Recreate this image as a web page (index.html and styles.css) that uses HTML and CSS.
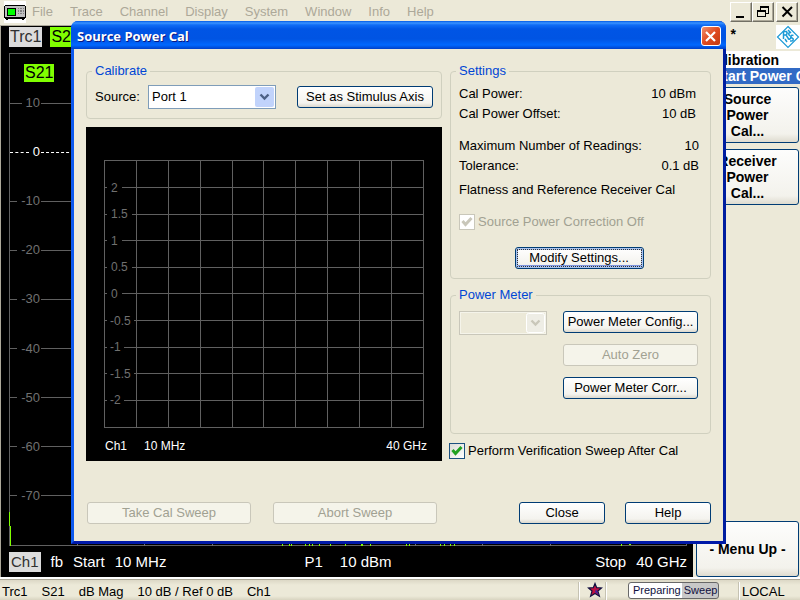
FILE: index.html
```html
<!DOCTYPE html>
<html lang="en">
<head>
<meta charset="utf-8">
<title>Source Power Cal</title>
<link rel="stylesheet" href="styles.css">
</head>
<body>
<header class="menubar">
  <svg class="app-icon" width="22" height="22" viewBox="0 0 22 22" shape-rendering="crispEdges" aria-hidden="true">
    <path fill="#fff" d="M0 0h22v22H0z"/>
    <path fill="#000" d="M1 4h20v1h1v12h-1v1h-1v1h-2v-1H4v1H2v-1H1v-1H0V5h1z"/>
    <path fill="#c0c0c0" d="M1 5h20v11H1z"/>
    <path fill="#000" d="M3 7h9v8H3z"/>
    <path fill="#0f0" d="M4 8h7v6H4z"/>
    <path fill="#808080" d="M14 7h1v1h-1zM16 7h2v1h-2zM19 7h1v1h-1zM14 9h1v2h-1zM16 9h2v2h-2zM19 9h1v2h-1zM14 12h1v1h-1zM16 12h2v1h-2zM19 12h1v1h-1z"/>
  </svg>
  <nav class="menu">
    <a href="#">File</a>
    <a href="#">Trace</a>
    <a href="#">Channel</a>
    <a href="#">Display</a>
    <a href="#">System</a>
    <a href="#">Window</a>
    <a href="#">Info</a>
    <a href="#">Help</a>
  </nav>
  <div class="window-buttons">
    <button type="button" aria-label="Minimize"><svg width="17" height="16" viewBox="0 0 17 16" shape-rendering="crispEdges"><path d="M3 12h8v2H3z"/></svg></button>
    <button type="button" aria-label="Restore"><svg width="17" height="16" viewBox="0 0 17 16" shape-rendering="crispEdges"><path fill-rule="evenodd" d="M5 2h9v8h-3V9h2V4H6v2H5zM2 6h9v7H2zm1 2v4h7V8z"/></svg></button>
    <button type="button" class="apart" aria-label="Close window"><svg width="17" height="16" viewBox="0 0 17 16"><path d="M3.500 3l9.500 9.500M13 3l-9.500 9.500" stroke="#000" stroke-width="2"/></svg></button>
  </div>
</header>

<main class="workspace">
  <section class="screen" aria-label="Trace display">
    <div class="trace-tags">
      <span class="tag tag-gray">Trc1</span>
      <span class="tag tag-green">S2</span>
    </div>
    <div class="trace-plot">
      <span class="tag tag-green trace-name">S21</span>
      <div class="scale">
        <div class="level"><span class="mark">10</span></div>
        <div class="level level-ref"><span class="mark">0</span></div>
        <div class="level"><span class="mark">-10</span></div>
        <div class="level"><span class="mark">-20</span></div>
        <div class="level"><span class="mark">-30</span></div>
        <div class="level"><span class="mark">-40</span></div>
        <div class="level"><span class="mark">-50</span></div>
        <div class="level"><span class="mark">-60</span></div>
        <div class="level"><span class="mark">-70</span></div>
      </div>
      <svg class="trace" width="640" height="34" viewBox="0 0 640 34" shape-rendering="crispEdges" aria-hidden="true">
        <path fill="#80ff00" d="M0 0h1v14H0zM1 14h1v20H1zM273 32h1v2h-1zM280 32h1v2h-1zM282 32h1v2h-1zM296 32h1v2h-1zM300 32h1v2h-1zM303 32h1v2h-1zM310 32h1v2h-1zM321 32h1v2h-1zM336 32h1v2h-1zM352 32h2v2h-2zM361 32h1v2h-1zM397 32h1v2h-1zM400 32h1v2h-1zM431 32h1v2h-1zM435 32h1v2h-1zM441 32h1v2h-1zM445 32h1v2h-1zM608 31h3v1h-3zM612 32h1v2h-1zM620 32h2v1h-2zM624 31h1v1h-1z"/>
        <path fill="#707070" d="M68 32h1v2h-1zM135 32h1v2h-1zM203 32h1v2h-1zM406 32h1v2h-1zM473 32h1v2h-1zM541 32h1v2h-1z"/>
      </svg>
    </div>
    <div class="channel-line">
      <div class="channel-part"><span class="tag tag-gray">Ch1</span><span>fb</span><span>Start</span><span>10 MHz</span></div>
      <div class="channel-part channel-mid"><span>P1</span><span>10 dBm</span></div>
      <div class="channel-part channel-end"><span>Stop</span><span>40 GHz</span></div>
    </div>
  </section>

  <aside class="softkeys">
    <div class="brand">
      <span class="modified">*</span>
      <svg width="24" height="24" viewBox="0 0 24 24" aria-hidden="true">
        <path fill="#fff" d="M0 0h24v24H0z"/>
        <g fill="none" stroke="#1c9ad6" stroke-width="1.500">
          <path d="M12 1.500L22.500 12 12 22.500 1.500 12z" stroke-width="1.200"/>
          <path d="M7.500 6v8M7.500 6.500h3q1.500 1.800-.5 3.500H8M10 10l3 4.500M14 7.500c-2 .5-1.500 2 0 3.500M12 13.500c1 1.500 3 .5 3-2"/>
          <path d="M17.500 10.500c-3-1-3.500 1.500-1.500 2.500s2 3.500-2 3M9 14l2 3M12 5l3 3"/>
        </g>
      </svg>
    </div>
    <div class="softkey-title">Calibration</div>
    <div class="softkey-sub">Start Power Cal</div>
    <button type="button" class="softkey">Source<br>Power<br>Cal...</button>
    <button type="button" class="softkey">Receiver<br>Power<br>Cal...</button>
    <button type="button" class="softkey softkey-up">- Menu Up -</button>
  </aside>
</main>

<footer class="statusbar">
  <div class="status-info"><span>Trc1</span><span>S21</span><span>dB Mag</span><span>10 dB / Ref 0 dB</span><span>Ch1</span></div>
  <div class="status-star">
    <svg width="16" height="16" viewBox="0 0 16 16" aria-hidden="true"><path fill="#c01040" stroke="#101040" stroke-width="1.200" d="M8 1.500l1.700 4.200 4.800.3-3.600 3 1.500 5.200L8 11.500l-4.400 2.700L5 9 1.500 6l4.800-.3z"/><path d="M9 7l3 6-4-3z" fill="#4020a0"/></svg>
  </div>
  <div class="status-progress"><span class="progress">Preparing <span class="rest">Sweep</span></span></div>
  <div class="status-local">LOCAL</div>
</footer>

<section class="dialog" role="dialog" aria-labelledby="dialog-title">
  <header class="titlebar">
    <h1 id="dialog-title">Source Power Cal</h1>
    <button type="button" class="close" aria-label="Close dialog"><svg width="17" height="17" viewBox="0 0 17 17"><path d="M4 4l9 9M13 4l-9 9" stroke="#fff" stroke-width="2.200"/></svg></button>
  </header>
  <div class="dialog-body">
    <div class="columns">
      <div class="column">
        <fieldset class="calibrate">
          <legend>Calibrate</legend>
          <label for="source">Source:</label>
          <span class="combo">
            <select id="source"><option>Port 1</option></select>
            <svg width="19" height="20" viewBox="0 0 19 20" aria-hidden="true"><rect width="19" height="20" rx="2" fill="#c1d3fb"/><path d="M5.500 7.500l4 4 4-4" fill="none" stroke="#4d6185" stroke-width="2.400"/></svg>
          </span>
          <button type="button" class="btn btn-axis">Set as Stimulus Axis</button>
        </fieldset>
        <div class="chart">
          <div class="chart-plot">
            <div class="verticals"><i></i><i></i><i></i><i></i><i></i><i></i><i></i><i></i><i></i><i></i></div>
            <div class="scale">
              <div class="level"><span>2</span></div>
              <div class="level"><span>1.5</span></div>
              <div class="level"><span>1</span></div>
              <div class="level"><span>0.5</span></div>
              <div class="level"><span>0</span></div>
              <div class="level negative"><span>-0.5</span></div>
              <div class="level negative"><span>-1</span></div>
              <div class="level negative"><span>-1.5</span></div>
              <div class="level negative"><span>-2</span></div>
            </div>
          </div>
          <div class="chart-foot"><span>Ch1</span><span>10 MHz</span><span class="stop">40 GHz</span></div>
        </div>
      </div>
      <div class="column">
        <fieldset class="settings">
          <legend>Settings</legend>
          <dl class="inner">
            <div><dt>Cal Power:</dt><dd>10 dBm</dd></div>
            <div><dt>Cal Power Offset:</dt><dd>10 dB</dd></div>
          </dl>
          <dl>
            <div><dt>Maximum Number of Readings:</dt><dd>10</dd></div>
            <div><dt>Tolerance:</dt><dd>0.1 dB</dd></div>
          </dl>
          <p>Flatness and Reference Receiver Cal</p>
          <label class="check check-off"><input type="checkbox" checked disabled><svg width="16" height="16" viewBox="0 0 16 16" aria-hidden="true"><path d="M3.500 7l3 3.500 6-6.500" /></svg>Source Power Correction Off</label>
          <button type="button" class="btn btn-default">Modify Settings...</button>
        </fieldset>
        <fieldset class="meter">
          <legend>Power Meter</legend>
          <span class="combo combo-off">
            <select aria-label="Power meter" disabled><option></option></select>
            <svg width="19" height="20" viewBox="0 0 19 20" aria-hidden="true"><rect x=".5" y=".5" width="18" height="19" rx="2" fill="#eeede5" stroke="#fff"/><path d="M5.500 7.500l4 4 4-4" fill="none" stroke="#c9c7ba" stroke-width="2.400"/></svg>
          </span>
          <div class="meter-buttons">
            <button type="button" class="btn">Power Meter Config...</button>
            <button type="button" class="btn" disabled>Auto Zero</button>
            <button type="button" class="btn">Power Meter Corr...</button>
          </div>
        </fieldset>
        <label class="check"><input type="checkbox" checked><svg width="16" height="16" viewBox="0 0 16 16" aria-hidden="true"><path d="M3.500 7l3 3.500 6-6.500" /></svg>Perform Verification Sweep After Cal</label>
      </div>
    </div>
    <div class="actions">
      <div class="action-group sweep-actions">
        <button type="button" class="btn" disabled>Take Cal Sweep</button>
        <button type="button" class="btn" disabled>Abort Sweep</button>
      </div>
      <div class="action-group">
        <button type="button" class="btn">Close</button>
        <button type="button" class="btn">Help</button>
      </div>
    </div>
  </div>
</section>
</body>
</html>
```
FILE: styles.css
```css
* { box-sizing: border-box; }

body {
  margin: 0;
  min-height: 100vh;
  display: flex;
  flex-direction: column;
  position: relative;
  overflow: hidden;
  background: #ece9d8;
  color: #000;
  font: 13px/16px "Liberation Sans", sans-serif;
}

button, select { font: inherit; color: inherit; }
button { padding: 0; }

/* Menu bar */
.menubar { display: flex; height: 25px; padding: 1px 2px 0 4px; }
.menu { display: flex; gap: 17px; padding: 3px 0 0 6px; }
.menu a { color: #aca899; text-decoration: none; }
.window-buttons { display: flex; margin-left: auto; }
.window-buttons button {
  width: 22px;
  height: 20px;
  margin-top: 1px;
  border: 1px solid;
  border-color: #fff #716f64 #716f64 #fff;
  box-shadow: inset -1px -1px #aca899;
  background: #ece9d8;
}
.window-buttons svg { display: block; margin: 0 auto; }
.window-buttons .apart { margin-left: 2px; }

/* Workspace */
.workspace { flex: 1; display: flex; }
.screen {
  flex: 1;
  display: flex;
  flex-direction: column;
  margin-right: 1px;
  padding: 1px 6px 5px 8px;
  border-top: 1px solid #aca899;
  border-left: 1px solid #aca899;
  background: #000;
  color: #fff;
}
.tag { color: #303030; font-size: 16px; line-height: 20px; padding: 0 1px; }
.tag-gray { background: #dcdcdc; }
.tag-green { background: #80ff00; color: #000; }
.trace-tags { display: flex; gap: 8px; height: 26px; align-items: flex-start; }
.trace-plot {
  flex: 1;
  position: relative;
  border: 1px solid #606060;
}
.trace-name { position: absolute; left: 14px; top: 10px; line-height: 18px; }
.trace { position: absolute; left: -1px; bottom: -1px; }
.scale { height: 100%; display: grid; grid-template-rows: 1fr repeat(9, 2fr) 1fr; }
.scale::before { content: ""; }
.level { display: flex; align-items: center; min-height: 0; color: #707070; }
.mark { display: flex; align-items: center; width: 30px; gap: 4px; }
.mark::before, .level::after { content: ""; flex: 1; border-top: 1px solid #606060; }
.trace-plot .level { gap: 1px; }
.level-ref { color: #fff; }
.level-ref .mark::before, .level-ref::after { border-top: 1px dashed #fff; }

.channel-line {
  display: grid;
  grid-template-columns: 1fr auto 1fr;
  margin-top: 6px;
  font-size: 15px;
  line-height: 20px;
}
.channel-line .tag { padding: 0 2px; font-size: 15px; }
.channel-part { display: flex; gap: 10px; }
.channel-mid { gap: 17px; }
.channel-end { justify-content: flex-end; }

/* Softkeys */
.softkeys { width: 106px; display: flex; flex-direction: column; font-weight: bold; font-size: 14px; overflow: hidden; }
.brand { display: flex; justify-content: flex-end; height: 26px; }
.modified { margin-right: 40px; line-height: 18px; }
.softkey-title, .softkey-sub { white-space: nowrap; background: #fff; }
.softkey-title { padding: 1px 0 0 12px; }
.softkey-sub { padding-left: 20px; background: #316ac5; color: #fff; }
.softkey {
  height: 56px;
  margin: 3px 1px 3px 2px;
  border: 1px solid #003c74;
  border-radius: 3px;
  background: linear-gradient(#fdfdfc, #f3f2ec 85%, #dedbcf);
  font-weight: bold;
}
.softkey-up { margin-top: auto; margin-bottom: 0; }

/* Status bar */
.statusbar {
  display: flex;
  height: 23px;
  padding-top: 4px;
  border-top: 1px solid #fff;
  background: linear-gradient(#fff 0 1px, #aca899 1px 2px, #dcd8c6 2px, #ece9d8 7px, #ece9d8 18px, #d8d4c0);
}
.status-info { display: flex; gap: 14px; flex: 1; padding: 2px 2px 0; }
.status-star, .status-progress, .status-local { border-left: 1px solid #c5c2b2; box-shadow: inset 1px 0 #fff; }
.status-star { width: 27px; padding-left: 8px; }
.status-progress { width: 133px; padding-left: 22px; }
.status-local { width: 62px; padding: 2px 3px 0; }
.progress {
  display: block;
  width: 91px;
  padding: 0 4px;
  border: 1px solid #686868;
  border-radius: 3px;
  background: linear-gradient(90deg, #fff 60%, #c8c8c8 60%);
  color: #101040;
  font-size: 11px;
  line-height: 15px;
  white-space: nowrap;
}

/* Dialog */
.dialog {
  position: absolute;
  top: 21px;
  left: 71px;
  right: 74px;
  border: solid #0831d9;
  border-width: 0 3px 3px;
  border-color: #0c59ee #001ea0 #0019a8 #0c59ee;
  border-radius: 7px 7px 0 0;
  background: #0c59ee;
}
.titlebar {
  display: flex;
  align-items: center;
  justify-content: space-between;
  height: 28px;
  margin: 0 -3px;
  padding: 2px 5px 0 6px;
  border-radius: 7px 7px 0 0;
  background: linear-gradient(#0058e6, #3a93ff 2px, #0f6cf5 4px, #0055e5 8px, #0054e3 18px, #0068ff 24px, #0040c8);
}
.titlebar h1 {
  margin: 0;
  color: #fff;
  font: bold 13px/20px "Open Sans", sans-serif;
  text-shadow: 1px 1px #0a1883;
}
.close {
  width: 20px;
  height: 20px;
  border: 1px solid #fff;
  border-radius: 3px;
  background: linear-gradient(135deg, #f0906f, #e04a20 50%, #c43a10);
}
.close svg { display: block; }
.dialog-body { padding: 14px 12px 17px; background: #ece9d8; }
.columns { display: grid; grid-template-columns: 356fr 261fr; gap: 8px; }
.column { display: flex; flex-direction: column; gap: 8px; min-width: 0; }

fieldset { margin: 0; min-width: 0; border: 1px solid #d0d0bf; border-radius: 4px; padding: 0 8px; }
legend { margin-left: -3px; padding: 0 3px; color: #0046d5; }

.btn {
  height: 22px;
  border: 1px solid #003c74;
  border-radius: 3px;
  background: linear-gradient(#fff, #f4f3ee 80%, #dcd8cd);
  white-space: nowrap;
}
.btn:disabled { border-color: #c9c7ba; background: #f5f4ea; color: #a1a192; }
.btn-default {
  box-shadow: inset 0 0 0 2px #a9c3f0, inset 0 -3px #7c93df;
  outline: 1px dotted #333;
  outline-offset: -3px;
}

.combo { position: relative; display: block; height: 24px; }
.combo select {
  appearance: none;
  display: block;
  width: 100%;
  height: 100%;
  padding: 0 22px 0 3px;
  border: 1px solid #7f9db9;
  border-radius: 0;
  background: #fff;
}
.combo svg { position: absolute; right: 2px; top: 2px; pointer-events: none; }
.combo-off select { border-color: #c9c7ba; background: #ece9d8; opacity: 1; box-shadow: inset 0 0 0 1px #f5f4ea; }

.calibrate { display: flex; align-items: center; padding: 6px 8px 9px; }
.calibrate label { width: 53px; }
.calibrate .combo { width: 128px; }
.btn-axis { width: 136px; margin-left: auto; }

.chart { height: 334px; padding: 33px 18px 0; background: #000; color: #fff; font-size: 12px; }
.chart-plot { position: relative; height: 268px; border: 1px solid #606060; }
.verticals { position: absolute; inset: 0 -1px 0 0; display: grid; grid-template-columns: repeat(10, 1fr); }
.verticals i { border-right: 1px solid #606060; }
.chart .level { gap: 4px; }
.chart .level::before { content: ""; width: 2px; border-top: 1px solid #606060; }
.chart .negative { gap: 3px; }
.chart-foot { display: flex; gap: 17px; padding: 10px 0 0 1px; margin-right: -3px; }
.stop { margin-left: auto; }

dl { margin: 0 0 4px; }
dl div { display: flex; justify-content: space-between; line-height: 20px; }
dd { margin: 0; }
.settings { padding: 5px 11px 9px 8px; }
.settings .inner { margin: 0 3px 12px 0; }
.settings p { margin: 0 0 14px; line-height: 20px; }
.settings .btn { display: block; width: 129px; margin: 17px auto 0; }

.check { display: flex; position: relative; gap: 3px; margin: 1px 0 0 -1px; }
.check input {
  appearance: none;
  width: 16px;
  height: 16px;
  margin: 0;
  border: 1px solid #1c5180;
  background: linear-gradient(135deg, #dcdcd7, #fff);
}
.check svg { position: absolute; left: 0; top: 0; fill: none; stroke: #21a121; stroke-width: 3px; }
.settings .check { margin: 0; }
.check-off { color: #a1a192; }
.check-off input { border-color: #c9c7ba; background: #fff; }
.check-off svg { stroke: #c9c7ba; }

.meter { padding: 8px 12px 34px 8px; display: flex; justify-content: space-between; align-items: flex-start; }
.meter .combo { width: 88px; }
.meter-buttons { display: flex; flex-direction: column; gap: 11px; width: 135px; }

.actions { display: flex; justify-content: space-between; padding-left: 1px; margin-top: 41px; }
.action-group { display: flex; gap: 20px; }
.action-group .btn { width: 86px; }
.sweep-actions { gap: 22px; }
.sweep-actions .btn { width: 164px; }
```
